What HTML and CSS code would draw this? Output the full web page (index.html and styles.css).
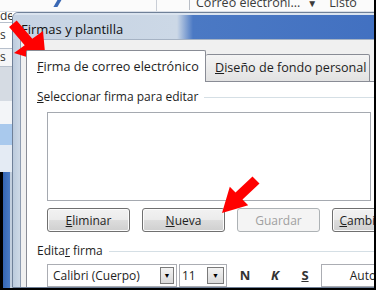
FILE: index.html
```html
<!DOCTYPE html>
<html lang="es">
<head>
    <meta charset="UTF-8">
    <meta name="viewport" content="width=device-width, initial-scale=1.0">
    <title>Firmas y plantilla</title>
    <link rel="stylesheet" href="styles.css">
</head>
<body>
    <div class="screen">
        <!-- window behind the dialog -->
        <div class="bg-top">
            <span class="bg-mark"></span>
            <span class="bg-sep"></span>
            <span class="bg-field">Correo electróni...</span>
            <span class="bg-caret">&#9660;</span>
            <span class="bg-status">Listo</span>
        </div>
        <div class="bg-left">
            <div class="bg-item">de</div>
            <div class="bg-item tall">s</div>
            <div class="bg-item boxed">s</div>
            <div class="bg-block gray"></div>
            <div class="bg-block light"></div>
            <div class="bg-block sky"></div>
            <div class="bg-block light2"></div>
            <div class="bg-block deep"></div>
        </div>

        <!-- dialog -->
        <div class="dialog">
            <div class="titlebar">Firmas y plantilla</div>
            <div class="client">
                <div class="tabs">
                    <div class="tab active"><u>F</u>irma de correo electrónico</div>
                    <div class="tab"><u>D</u>iseño de fondo personal</div>
                </div>
                <div class="panel">
                    <div class="group-title"><span><u>S</u>eleccionar firma para editar</span></div>
                    <div class="listbox"></div>
                    <div class="buttons">
                        <button class="btn"><u>E</u>liminar</button>
                        <button class="btn"><u>N</u>ueva</button>
                        <button class="btn" disabled>Guardar</button>
                        <button class="btn wide"><u>C</u>ambiar nombre</button>
                    </div>
                    <div class="group-title second"><span>Edita<u>r</u> firma</span></div>
                    <div class="toolbar">
                        <div class="combo font-combo">
                            <span class="combo-text">Calibri (Cuerpo)</span>
                            <span class="drop">&#9660;</span>
                        </div>
                        <div class="combo size-combo">
                            <span class="combo-text">11</span>
                            <span class="drop">&#9660;</span>
                        </div>
                        <span class="fmt fmt-bold">N</span>
                        <span class="fmt fmt-italic">K</span>
                        <span class="fmt fmt-under">S</span>
                        <div class="color-box">Automático</div>
                    </div>
                </div>
            </div>
        </div>

        <!-- red annotation arrows -->
        <svg class="arrow" width="376" height="290" viewBox="0 0 376 290">
            <polygon fill="#f00" points="16.7,20.6 32.3,38.8 43,31 46,63 14,53 24.7,45.3 9.1,27.1"/>
            <polygon fill="#f00" points="259.5,183.5 242.5,199.5 248.2,205.2 222,213 229.8,186.8 235.5,192.5 252.5,176.5"/>
        </svg>
    </div>
</body>
</html>
```

FILE: styles.css
```css
body {
    margin: 0;
    background-color: #000;
    font-family: 'Open Sans', 'Noto Sans', sans-serif;
    font-size: 12px;
    color: #1e1e1e;
}
.screen {
    width: 376px;
    height: 290px;
    box-sizing: border-box;
    border-right: 2px solid #000;
    border-bottom: 2px solid #000;
    overflow: hidden;
    position: relative;
    display: grid;
    grid-template-columns: 12px 420px;
    grid-template-rows: 12px 276px;
    background-color: #fff;
}

/* background window */
.bg-top {
    grid-column: 1 / -1;
    display: flex;
    align-items: flex-end;
    height: 12px;
    overflow: hidden;
    background-color: #fbfbfb;
    border-bottom: 1px solid #d9dee6;
    box-sizing: border-box;
    color: #3b3b3b;
    white-space: nowrap;
}
.bg-mark {
    flex: none;
    width: 4px;
    height: 9px;
    margin-left: 56px;
    margin-bottom: 4px;
    background-color: #3a68b4;
    transform: skewX(-30deg);
}
.bg-sep {
    flex: none;
    width: 1px;
    height: 12px;
    margin-left: 96px;
    background-color: #c9ced6;
}
.bg-field {
    flex: none;
    margin-left: 32px;
    padding-left: 6px;
    border-left: 1px solid #b9bec6;
    line-height: 14px;
    margin-bottom: 1px;
    font-size: 12.5px;
}
.bg-caret {
    flex: none;
    font-size: 10px;
    line-height: 10px;
    margin-left: 7px;
    margin-bottom: 3px;
}
.bg-status {
    flex: none;
    margin-left: 12px;
    line-height: 14px;
    margin-bottom: 1px;
    font-size: 12.5px;
}
.bg-left {
    display: flex;
    flex-direction: column;
    background-color: #eef1f5;
    overflow: hidden;
    font-size: 12px;
    color: #333;
}
.bg-item {
    height: 10px;
    line-height: 8px;
    border-bottom: 1px solid #b7c0cc;
    background-color: #fff;
}
.bg-item.tall {
    height: 25px;
    line-height: 24px;
}
.bg-item.boxed {
    height: 17px;
    line-height: 16px;
    background-color: #f5f6f8;
}
.bg-block.gray {
    height: 34px;
    background-color: #d5dbe3;
}
.bg-block.light {
    height: 23px;
    background-color: #f3f5f8;
}
.bg-block.sky {
    height: 21px;
    background-color: #a9c9ed;
}
.bg-block.light2 {
    height: 27px;
    background-color: #e4ebf4;
}
.bg-block.deep {
    flex: 1;
    background: linear-gradient(90deg, #000 0, #000 3px, #3566b4 3px, #4a7cc6 10px, #c3cfde 10px);
}

/* dialog frame */
.dialog {
    display: flex;
    flex-direction: column;
    border: 1px solid #6f8098;
    border-radius: 6px 0 0 0;
    background: linear-gradient(90deg, #bccbdd 0, #d0dbe8 8px);
    padding-left: 7px;
    overflow: hidden;
}
.titlebar {
    height: 26px;
    margin-left: -7px;
    padding: 4px 0 0 8px;
    line-height: 20px;
    box-sizing: border-box;
    font-size: 13px;
    color: #111;
    background: linear-gradient(90deg, #c6d3e3 0, #ccd8e6 164px, #4b79c4 180px, #3f6ec0 100%);
    border-top: 2px solid #dbe4ef;
}
.client {
    flex: 1;
    display: flex;
    flex-direction: column;
    background-color: #f0f0f0;
    border-left: 1px solid #8d9bb0;
    border-top: 1px solid #a6b3c4;
    padding: 10px 0 0 5px;
}

/* tabs */
.tabs {
    display: flex;
    align-items: flex-end;
    position: relative;
    z-index: 1;
    margin-bottom: -1px;
}
.tab {
    flex: none;
    height: 28px;
    width: 164px;
    box-sizing: border-box;
    padding: 5px 0 0 9px;
    line-height: 16px;
    font-size: 12.6px;
    border: 1px solid #898c95;
    border-left: none;
    border-radius: 2px 2px 0 0;
    background: linear-gradient(#f4f4f4, #e2e2e2);
    white-space: nowrap;
}
.tab.active {
    width: 180px;
    height: 32px;
    padding: 8px 0 0 10px;
    border-left: 1px solid #898c95;
    border-bottom: none;
    background: #fff;
}
.panel {
    flex: 1;
    display: flex;
    flex-direction: column;
    background-color: #fff;
    border: 1px solid #898c95;
    border-right: none;
    border-bottom: none;
    padding: 7px 0 0 10px;
}
.group-title {
    display: flex;
    align-items: center;
    gap: 6px;
    line-height: 16px;
    white-space: nowrap;
}
.group-title::after {
    content: "";
    flex: 1;
    height: 1px;
    background-color: #d5dfe5;
}
.group-title.second {
    margin-top: 11px;
}
.listbox {
    width: 324px;
    height: 89px;
    box-sizing: border-box;
    margin: 7px 0 0 10px;
    border: 1px solid #a5a9b0;
    background-color: #fff;
}
.buttons {
    display: flex;
    gap: 12px;
    margin: 7px 0 0 10px;
}
.btn {
    width: 83px;
    height: 24px;
    flex: none;
    padding: 0;
    font-family: inherit;
    font-size: 12px;
    color: #1e1e1e;
    border: 1px solid #707070;
    border-radius: 3px;
    background: linear-gradient(#f2f2f2 0, #ebebeb 50%, #dddddd 50%, #cfcfcf 100%);
    box-shadow: inset 0 0 0 1px #fcfcfc;
    white-space: nowrap;
}
.btn.wide {
    width: 110px;
}
.btn:disabled {
    color: #a0a0a0;
    border-color: #adb2b5;
    background: #f4f4f4;
    box-shadow: none;
}

/* formatting toolbar */
.toolbar {
    display: flex;
    align-items: flex-start;
    margin: 5px 0 0 10px;
    height: 23px;
}
.toolbar > * {
    flex: none;
}
.combo {
    display: flex;
    align-items: center;
    height: 23px;
    box-sizing: border-box;
    border: 1px solid #abadb3;
    background-color: #fff;
    padding: 0 2px 0 5px;
}
.combo-text {
    flex: 1;
    white-space: nowrap;
}
.font-combo {
    width: 130px;
}
.size-combo {
    width: 48px;
    margin-left: 2px;
    padding-left: 2px;
}
.drop {
    width: 14px;
    height: 17px;
    box-sizing: border-box;
    border: 1px solid #7a7a7a;
    background: linear-gradient(#f3f3f3, #d9d9d9);
    font-size: 7px;
    line-height: 15px;
    text-align: center;
    color: #000;
}
.size-combo .drop {
    width: 17px;
}
.fmt {
    width: 30px;
    text-align: center;
    line-height: 22px;
    font-size: 13px;
    font-weight: bold;
    color: #333;
}
.fmt-bold {
    margin-left: 3px;
}
.fmt-italic {
    font-style: italic;
}
.fmt-under {
    text-decoration: underline;
}
.color-box {
    width: 122px;
    height: 23px;
    margin-left: 1px;
    box-sizing: border-box;
    border: 1px solid #abadb3;
    text-align: center;
    line-height: 21px;
}

/* annotation overlay */
.arrow {
    position: absolute;
    left: 0;
    top: 0;
    pointer-events: none;
}
```
